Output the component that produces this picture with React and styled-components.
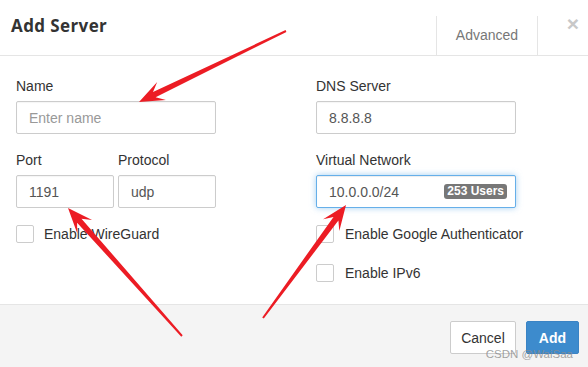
import React from 'react';
import styled, { createGlobalStyle } from 'styled-components';

const GlobalStyle = createGlobalStyle`
  html, body {
    margin: 0;
    padding: 0;
    background: #ffffff;
  }
  body {
    font-family: "Liberation Sans", Arial, sans-serif;
    color: #333;
  }
`;

const Modal = styled.div`
  position: relative;
  width: 588px;
  height: 367px;
  display: flex;
  flex-direction: column;
  background: #fff;
  overflow: hidden;
`;

const Header = styled.div`
  height: 55px;
  border-bottom: 1px solid #e5e5e5;
  display: flex;
  align-items: stretch;
  flex-shrink: 0;
`;

const Title = styled.h4`
  margin: 0;
  padding: 16px 0 0 11px;
  flex: 1;
  font-family: "Open Sans", "DejaVu Sans", sans-serif;
  font-weight: 700;
  font-size: 17px;
  letter-spacing: 0.4px;
  line-height: 20px;
  color: #333;
`;

const Tab = styled.div`
  width: 100px;
  margin-top: 16px;
  border-left: 1px solid #e5e5e5;
  border-right: 1px solid #e5e5e5;
  display: flex;
  align-items: center;
  justify-content: center;
  padding-bottom: 1px;
  font-size: 14px;
  color: #777;
`;

const Close = styled.div`
  width: 50px;
  display: flex;
  justify-content: center;
  padding: 12px 0 0 20px;
  box-sizing: border-box;
  font-size: 21px;
  font-weight: 700;
  line-height: 24px;
  color: #c8c8c8;
`;

const Body = styled.div`
  flex: 1;
  display: grid;
  grid-template-columns: 200px 200px;
  column-gap: 100px;
  padding: 20px 16px 0;
  align-content: start;
`;

const Column = styled.div`
  display: flex;
  flex-direction: column;
`;

const Field = styled.div`
  display: flex;
  flex-direction: column;
  margin-bottom: 16px;
`;

const Label = styled.label`
  font-size: 14px;
  line-height: 20px;
  color: #333;
  margin-bottom: 5px;
`;

const InputBox = styled.div`
  position: relative;
  height: 33px;
  box-sizing: border-box;
  border: 1px solid ${(p) => (p.$focus ? '#66afe9' : '#ccc')};
  box-shadow: ${(p) =>
    p.$focus ? 'inset 0 1px 1px rgba(0,0,0,.075), 0 0 6px rgba(102,175,233,.6)' : 'inset 0 1px 1px rgba(0,0,0,.04)'};
  border-radius: 2px;
  display: flex;
  align-items: center;
  padding: 0 8px 0 12px;
  font-size: 14px;
  color: ${(p) => (p.$placeholder ? '#999' : '#555')};
  background: #fff;
`;

const Value = styled.span`
  flex: 1;
`;

const Badge = styled.span`
  background: #777;
  color: #fff;
  font-size: 12px;
  font-weight: 700;
  line-height: 15px;
  padding: 0 3px;
  border-radius: 3px;
`;

const Pair = styled.div`
  display: grid;
  grid-template-columns: 98px 98px;
  column-gap: 4px;
`;

const Check = styled.div`
  display: flex;
  align-items: center;
  height: 20px;
  margin-top: ${(p) => p.$top || 0}px;
  font-size: 14px;
  color: #333;
  white-space: nowrap;
`;

const Box = styled.span`
  width: 18px;
  height: 18px;
  box-sizing: border-box;
  border: 1px solid #ccc;
  border-radius: 2px;
  background: #fff;
  margin-right: ${(p) => p.$gap}px;
  flex-shrink: 0;
`;

const Footer = styled.div`
  height: 63px;
  flex-shrink: 0;
  border-top: 1px solid #e5e5e5;
  background: #f4f4f4;
  display: flex;
  justify-content: flex-end;
  align-items: flex-start;
  padding: 16px 9px 0 0;
  box-sizing: border-box;
  gap: 10px;
`;

const Button = styled.button`
  height: 33px;
  padding: 0 ${(p) => (p.$primary ? 12 : 10)}px;
  font-family: "Liberation Sans", Arial, sans-serif;
  font-size: 14px;
  border-radius: 2px;
  border: 1px solid ${(p) => (p.$primary ? '#3a83c4' : '#ccc')};
  background: ${(p) => (p.$primary ? '#3d8bcd' : '#fff')};
  color: ${(p) => (p.$primary ? '#fff' : '#333')};
  font-weight: ${(p) => (p.$primary ? 700 : 400)};
`;

const Watermark = styled.div`
  position: absolute;
  right: 15px;
  bottom: 7px;
  font-size: 11.5px;
  color: rgba(140, 140, 140, 0.8);
  font-family: "Liberation Sans", Arial, sans-serif;
`;

const Overlay = styled.svg`
  position: absolute;
  left: 0;
  top: 0;
  pointer-events: none;
`;

const arrowPoints = (tail, tip) => {
  const dx = tip[0] - tail[0];
  const dy = tip[1] - tail[1];
  const len = Math.hypot(dx, dy);
  const ux = dx / len;
  const uy = dy / len;
  const px = -uy;
  const py = ux;
  const at = (d, w) => [tip[0] - ux * d + px * w, tip[1] - uy * d + py * w];
  const pts = [
    [tail[0] + px * 1, tail[1] + py * 1],
    at(17, 3),
    at(25, 10),
    tip,
    at(25, -10),
    at(17, -3),
    [tail[0] - px * 1, tail[1] - py * 1],
  ];
  return pts.map((p) => p.map((v) => v.toFixed(1)).join(',')).join(' ');
};

const arrows = [
  [[286, 31], [139, 102]],
  [[182, 336], [68, 208]],
  [[263, 318], [346, 205]],
];

export default function App() {
  return (
    <>
      <GlobalStyle />
      <Modal>
        <Header>
          <Title>Add Server</Title>
          <Tab>Advanced</Tab>
          <Close>×</Close>
        </Header>
        <Body>
          <Column>
            <Field>
              <Label>Name</Label>
              <InputBox $placeholder>
                <Value>Enter name</Value>
              </InputBox>
            </Field>
            <Pair>
              <Field>
                <Label>Port</Label>
                <InputBox>
                  <Value>1191</Value>
                </InputBox>
              </Field>
              <Field>
                <Label>Protocol</Label>
                <InputBox>
                  <Value>udp</Value>
                </InputBox>
              </Field>
            </Pair>
            <Check>
              <Box $gap={10} />
              Enable WireGuard
            </Check>
          </Column>
          <Column>
            <Field>
              <Label>DNS Server</Label>
              <InputBox>
                <Value>8.8.8.8</Value>
              </InputBox>
            </Field>
            <Field>
              <Label>Virtual Network</Label>
              <InputBox $focus>
                <Value>10.0.0.0/24</Value>
                <Badge>253 Users</Badge>
              </InputBox>
            </Field>
            <Check>
              <Box $gap={11} />
              Enable Google Authenticator
            </Check>
            <Check $top={19}>
              <Box $gap={11} />
              Enable IPv6
            </Check>
          </Column>
        </Body>
        <Footer>
          <Button>Cancel</Button>
          <Button $primary>Add</Button>
        </Footer>
        <Watermark>CSDN @WaiSaa</Watermark>
        <Overlay width="588" height="367" viewBox="0 0 588 367">
          {arrows.map(([tail, tip], i) => (
            <polygon key={i} points={arrowPoints(tail, tip)} fill="#ec1c24" />
          ))}
        </Overlay>
      </Modal>
    </>
  );
}
